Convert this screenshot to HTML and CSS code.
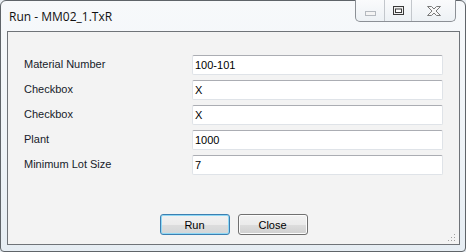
FILE: index.html
```html
<!DOCTYPE html>
<html lang="en">
<head>
  <meta charset="UTF-8" />
  <title>Run - MM02_1.TxR</title>
  <link rel="stylesheet" href="styles.css">
</head>
<body>

<div class="window">
  <div class="titlebar">
    <span class="title">Run - MM02_1.TxR</span>
    <div class="caption-buttons">
      <div class="cap cap-min">
        <svg width="11" height="5" viewBox="0 0 11 5"><rect x="0.5" y="0.5" width="10" height="4" fill="#f4f4f4" stroke="#b4b9bf"/></svg>
      </div>
      <div class="cap cap-max">
        <svg width="11" height="9" viewBox="0 0 11 9"><rect x="0.5" y="0.5" width="10" height="8" fill="#f0f0f0" stroke="#3a3a3a"/><rect x="2.5" y="3" width="6" height="3.5" fill="#ffffff" stroke="#3a3a3a"/></svg>
      </div>
      <div class="cap cap-close">
        <svg width="16" height="12" viewBox="0 0 16 12"><path d="M1.5 1.5h4l2.5 2.5l2.5-2.5h4l-4.5 4.5l4.5 4.5h-4l-2.5-2.5l-2.5 2.5h-4l4.5-4.5z" fill="#f7f7f7" stroke="#7a7a7a" stroke-linejoin="round"/></svg>
      </div>
    </div>
  </div>

  <div class="client">
    <div class="form">
      <label class="field-label">Material Number</label>
      <div class="field">100-101</div>
      <label class="field-label">Checkbox</label>
      <div class="field">X</div>
      <label class="field-label">Checkbox</label>
      <div class="field">X</div>
      <label class="field-label">Plant</label>
      <div class="field">1000</div>
      <label class="field-label">Minimum Lot Size</label>
      <div class="field">7</div>
    </div>

    <div class="actions">
      <button class="btn btn-default">Run</button>
      <button class="btn">Close</button>
    </div>

    <div class="grip">
      <svg width="8" height="8" viewBox="0 0 8 8">
        <g fill="#a0a0a0">
          <rect x="6" y="0" width="1" height="1"/>
          <rect x="3" y="3" width="1" height="1"/><rect x="6" y="3" width="1" height="1"/>
          <rect x="0" y="6" width="1" height="1"/><rect x="3" y="6" width="1" height="1"/><rect x="6" y="6" width="1" height="1"/>
        </g>
      </svg>
    </div>
  </div>
</div>

</body>
</html>
```

FILE: styles.css
```css
body {
  margin: 0;
  padding: 0;
  width: 466px;
  height: 252px;
  overflow: hidden;
  background: #e9eef3;
  font-family: "Liberation Sans", Arial, sans-serif;
}
.window {
  box-sizing: border-box;
  width: 466px;
  height: 252px;
  border: 1px solid #5f6469;
  border-radius: 6px 6px 4px 4px;
  padding: 0 5px 6px 6px;
  background: linear-gradient(#f7f9fb, #eef3f7 60%, #e6edf3);
  display: flex;
  flex-direction: column;
}
.titlebar {
  height: 30px;
  display: flex;
  justify-content: space-between;
  align-items: flex-start;
}
.title {
  margin-top: 7px;
  margin-left: 2px;
  font-family: "Open Sans", "Liberation Sans", sans-serif;
  font-size: 12px;
  color: #111;
}
.caption-buttons {
  display: flex;
  height: 21px;
  margin-top: -1px;
  margin-right: 4px;
  border: 1px solid #8c9096;
  border-top: none;
  border-radius: 0 0 5px 5px;
  background: linear-gradient(#fafbfc, #edf1f5);
  overflow: hidden;
}
.cap {
  display: flex;
  align-items: center;
  justify-content: center;
}
.cap-min {
  width: 28px;
  border-right: 1px solid #c3c7cc;
  padding-top: 6px;
}
.cap-max {
  width: 26px;
  border-right: 1px solid #c3c7cc;
}
.cap-close {
  width: 43px;
}
.client {
  flex: 1;
  position: relative;
  border: 1px solid #6f7378;
  background: #f3f3f3;
  display: flex;
  flex-direction: column;
}
.form {
  display: grid;
  grid-template-columns: 168px 251px;
  grid-auto-rows: 20px;
  row-gap: 5px;
  padding: 23px 0 0 16px;
  align-items: center;
}
.field-label {
  font-size: 11px;
  color: #161b2a;
  margin-top: -3px;
}
.field {
  box-sizing: border-box;
  height: 20px;
  background: #fff;
  border: 1px solid #dfe3e8;
  border-top-color: #abadb3;
  border-radius: 2px;
  padding: 3px 0 0 2px;
  font-size: 11px;
  color: #000;
}
.actions {
  margin-top: auto;
  margin-bottom: 9px;
  display: flex;
  justify-content: center;
  gap: 8px;
}
.btn {
  box-sizing: border-box;
  width: 70px;
  height: 21px;
  font-family: "Liberation Sans", Arial, sans-serif;
  font-size: 11px;
  color: #000;
  border: 1px solid #707070;
  border-radius: 3px;
  background: linear-gradient(#f2f2f2 0%, #ebebeb 50%, #dddddd 51%, #cfcfcf 100%);
  box-shadow: inset 0 0 0 1px #fcfcfc;
  padding: 0;
}
.btn-default {
  border-color: #3c7fb1;
  box-shadow: inset 0 0 0 1px #8fd8f5;
  background: linear-gradient(#f2f2f2 0%, #ebebeb 50%, #dddddd 51%, #d3d6d8 100%);
}
.grip {
  position: absolute;
  right: 3px;
  bottom: 2px;
  line-height: 0;
}
```
